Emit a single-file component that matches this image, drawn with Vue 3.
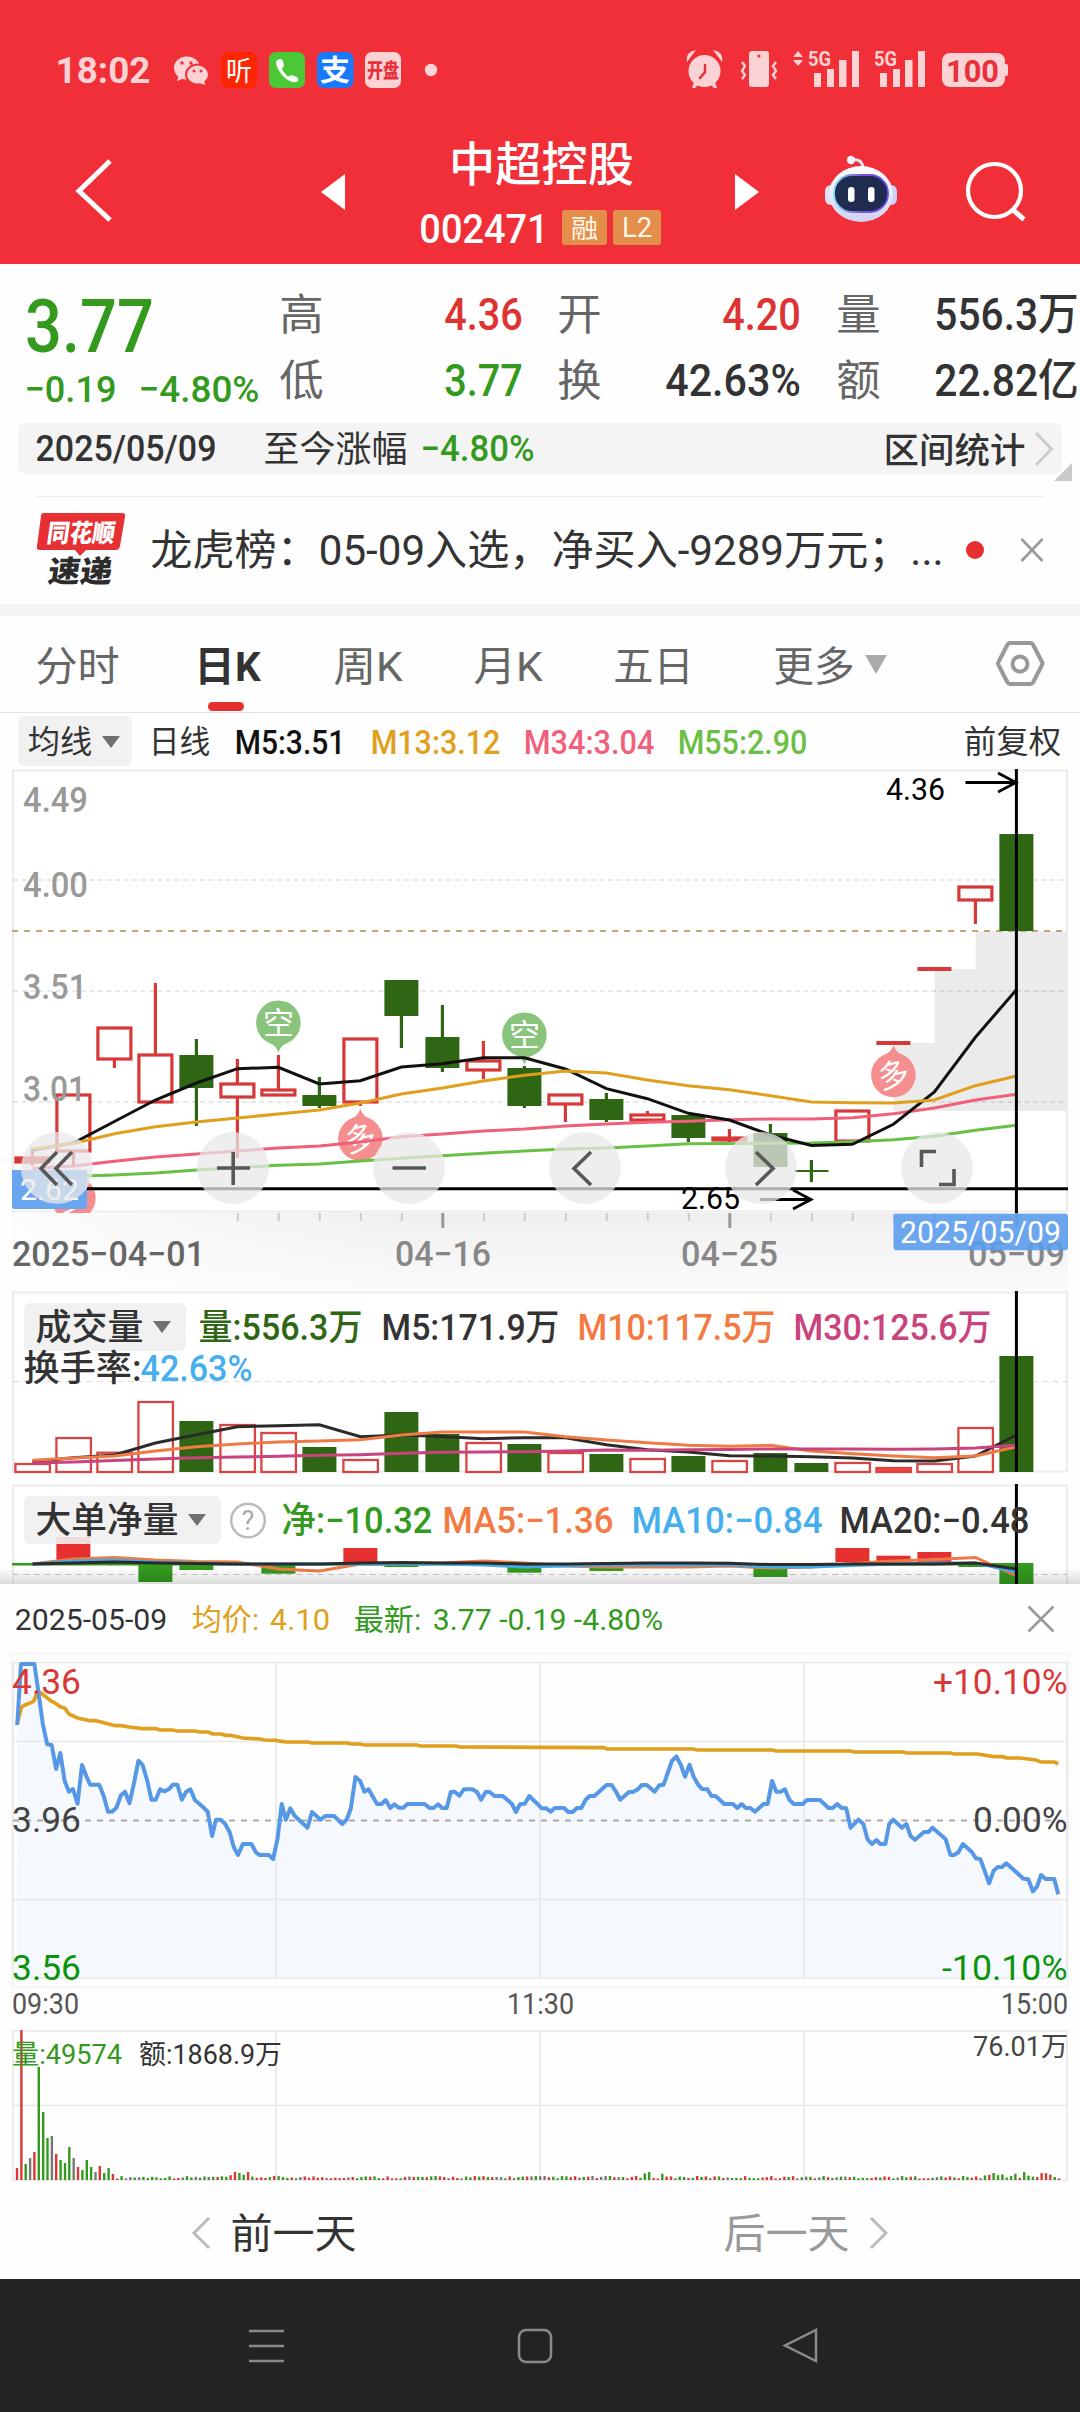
<script setup>
import { h } from 'vue'

// Single line of text fitted to an exact ink width; height equals the cap height.
const Fit = (p) => {
  const b = p.s * 0.04
  const cap = p.s * 0.72
  return h('svg', { width: p.w, height: cap, class: 'fit', style: { display: 'block', overflow: 'visible', flex: 'none' } }, [
    h('text', { x: -b, y: cap, 'font-size': p.s, textLength: +p.w + 2 * b, lengthAdjust: 'spacingAndGlyphs', fill: 'currentColor' }, p.t),
  ])
}
Fit.props = ['t', 'w', 's']

const cx = (i) => 32.4 + 41 * i
const line = (ys) => ys.map((y, i) => `${cx(i).toFixed(1)},${y}`).join(' ')

// [up, body top, body bottom, high, low]
const candles = [
  [1, 1158, 1162, 1148, 1166], [1, 1095, 1151, 1095, 1165], [1, 1028, 1059, 1028, 1068], [1, 1055, 1102, 983, 1102],
  [0, 1055, 1088, 1039, 1126], [1, 1084, 1097, 1059, 1158], [1, 1090, 1095, 1055, 1095], [0, 1095, 1106, 1077, 1108],
  [1, 1039, 1102, 1039, 1106], [0, 980, 1016, 980, 1048], [0, 1037, 1068, 1005, 1072], [1, 1061, 1070, 1041, 1079],
  [0, 1068, 1106, 1066, 1108], [1, 1095, 1104, 1095, 1122], [0, 1099, 1120, 1093, 1122], [1, 1115, 1120, 1111, 1120],
  [0, 1115, 1138, 1115, 1142], [1, 1138, 1140, 1129, 1143], [0, 1133, 1167, 1124, 1167], [0, 1170, 1172, 1160, 1182],
  [1, 1111, 1141, 1111, 1141], [1, 1043, 1043, 1043, 1043], [1, 969, 969, 969, 969], [1, 887, 900, 887, 924],
  [0, 834, 931, 834, 931],
]
const ma5 = [1150, 1143, 1121.5, 1100, 1083, 1068.7, 1067.3, 1084, 1080.7, 1067, 1063.7, 1057.7, 1057.7, 1069, 1088.7, 1098.7, 1113.3, 1120, 1135, 1145.5, 1144.3, 1124.3, 1092, 1037.3, 989.7]
const ma13 = [1149, 1143.5, 1133.7, 1126.7, 1122, 1118, 1114, 1110, 1103, 1094, 1088, 1081, 1075.3, 1071, 1073, 1080, 1085.7, 1089.7, 1095.7, 1102, 1102.7, 1103, 1100, 1085.7, 1076]
const ma34 = [1168.5, 1166, 1161.3, 1157, 1154, 1151, 1148, 1146, 1142, 1136.7, 1134, 1131, 1129, 1126, 1124, 1122.3, 1121.3, 1119.7, 1119, 1119, 1117.7, 1113.7, 1108, 1100, 1094.3]
const ma55 = [1178, 1176.3, 1175, 1173, 1170, 1167.7, 1165.3, 1164, 1161, 1158.3, 1155.7, 1153.3, 1151, 1149, 1148, 1146, 1143.7, 1143.6, 1143.3, 1143, 1141.7, 1139.7, 1136.3, 1130.3, 1125.3]

const volumes = [1464, 1438, 1452.7, 1402, 1421, 1425, 1433, 1447, 1460, 1412, 1434, 1443, 1444, 1453, 1454, 1459, 1456, 1461, 1453, 1463, 1463, 1468, 1464, 1428, 1356]
const v5 = [1461.7, 1457.7, 1455, 1443, 1434.7, 1426.7, 1425.7, 1424.7, 1436.7, 1435, 1436.5, 1438.7, 1437.7, 1437.7, 1444.7, 1449.7, 1452, 1455.7, 1456, 1456.7, 1458, 1460.7, 1461, 1456, 1435]
const v10 = [1460.3, 1458, 1456, 1451, 1446.7, 1444, 1442, 1441, 1439.7, 1435, 1432, 1432, 1432, 1436.7, 1440, 1442.7, 1445.3, 1446.3, 1445.3, 1451, 1453.7, 1456, 1457.7, 1456, 1446.7]
const v30 = [1463, 1462, 1460.5, 1459, 1457.7, 1457, 1456.3, 1455.3, 1454.7, 1453.3, 1452.3, 1452, 1451.7, 1451, 1450, 1450.2, 1449.7, 1449.4, 1449, 1449, 1449, 1449.3, 1449, 1448, 1445.3]

// [index, top, bottom, inflow]
const flows = [
  [1, 1537, 1562, 1], [3, 1564, 1582, 0], [4, 1564, 1570, 0], [6, 1564, 1573.7, 0], [8, 1548, 1562, 1], [9, 1564, 1567, 0],
  [12, 1564, 1572.7, 0], [14, 1564, 1571, 0], [18, 1563, 1577, 0], [20, 1548, 1562, 1], [21, 1555.7, 1562, 1],
  [22, 1552, 1562, 1], [23, 1564, 1567, 0], [24, 1563, 1584, 0],
]
const f5 = [1564, 1559, 1557.5, 1560, 1561.5, 1562, 1569, 1571, 1564, 1563.5, 1563, 1561, 1563, 1566, 1567, 1567, 1567, 1566, 1568, 1567, 1563.5, 1561, 1559.5, 1557.5, 1576]
const f10 = [1564, 1561, 1560, 1562, 1563, 1564, 1564, 1564, 1564, 1564, 1564, 1565, 1567, 1566, 1565, 1565, 1565, 1565, 1567, 1567, 1565.5, 1564, 1563, 1563, 1572]
const f20 = [1564, 1563, 1562, 1563, 1563.5, 1564, 1564, 1564, 1563, 1562.5, 1563, 1563, 1564, 1564, 1563.5, 1563, 1563, 1563.3, 1564.6, 1564.6, 1564, 1564, 1564, 1563, 1569]

const pins = [
  { i: 6, y: 1022.7, up: false, t: '空' }, { i: 12, y: 1034.7, up: false, t: '空' },
  { i: 8, y: 1138.7, up: true, t: '多' }, { i: 1, y: 1198, up: true, t: '多' }, { i: 21, y: 1075, up: true, t: '多' },
]

// Intraday series, sampled on a fine grid: x in 1/2.9037 px, y in 1/3 px below 1590
const grid = (s) => s.trim().split(/\s+/).map((q) => {
  const [x, y] = q.split(',').map(Number)
  return `${(x / 2.9037).toFixed(1)},${(1590 + y / 3).toFixed(1)}`
}).join(' ')
const price = grid(`50,405 61,222 100,222 112,310 124,400 137,463 150,465 163,537 175,489 188,573 200,605 212,597 225,641 238,525 250,557 262,584 288,584 301,618 314,665 325,665 338,653 351,616 363,605 376,640 390,575 402,512 414,525 427,570 440,629 452,629 465,598 478,604 490,598 502,584 515,584 528,629 540,606 553,598 566,630 590,652 603,665 616,738 627,689 641,689 654,702 667,727 679,772 691,795 705,762 730,762 743,787 754,795 781,795 793,807 806,745 818,642 830,689 843,655 856,678 893,713 906,666 931,689 944,678 970,678 994,702 1007,688 1019,655 1032,561 1046,573 1058,605 1070,598 1095,642 1108,642 1120,630 1133,654 1145,643 1158,653 1171,653 1183,642 1233,642 1247,654 1259,654 1272,643 1284,654 1297,654 1309,606 1320,605 1334,617 1347,598 1372,598 1385,606 1397,629 1410,606 1422,606 1436,618 1460,618 1486,641 1498,666 1510,643 1524,641 1537,618 1560,641
1573,655 1586,655 1599,665 1611,654 1638,654 1650,666 1663,666 1675,654 1688,654 1700,630 1712,618 1726,618 1761,585 1776,585 1788,604 1801,629 1826,606 1838,606 1852,598 1864,585 1878,585 1901,605 1914,586 1927,584 1951,513 1964,499 1977,525 1989,560 2002,524 2015,562 2028,585 2039,597 2054,598 2066,618 2078,618 2103,642 2128,642 2141,654 2153,642 2166,654 2179,654 2192,665 2217,642 2229,642 2242,573 2254,605 2267,605 2279,598 2292,629 2305,642 2331,642 2343,630 2381,630 2406,654 2418,654 2431,642 2443,653 2457,655 2470,713 2493,689 2507,702 2519,748 2532,762 2545,750 2556,762 2571,762 2582,702 2594,689 2619,713 2632,702 2644,738 2657,749 2683,726 2696,726 2708,713 2746,748 2760,795 2770,795 2783,787 2796,762 2821,785 2834,805 2847,808 2872,880 2885,842 2897,831 2910,831 2922,820 2972,866 2986,868 2999,904 3011,890 3023,855 3036,867 3061,867 3073,913`)
const average = grid(`50,400 62,352 72,345 90,338 98,333 108,308 118,308 148,333 160,339 175,350 188,354 201,373 225,384 262,392 278,392 335,407 352,407 375,411 412,416 452,416 465,420 500,420 514,423 566,423 580,426 604,426 617,432 642,432 655,436 670,436 705,444 754,447 768,450 800,451 830,456 895,456 906,459 1008,459 1020,462 1045,462 1058,465 1210,465 1222,468 1325,468 1335,471 1568,472 1753,473 1763,477 2013,477 2025,480 2243,480 2253,483 2470,483 2481,486 2621,486 2633,489 2760,489 2770,492 2838,492 2886,500 2911,500 2923,504 2960,504 3008,510 3023,516 3061,516 3073,521`)
const area = `17,1978 ${price} 1063,1904 1063,1978`

// Intraday volume per minute: [height, 1 red / 0 green / 2 grey]
const opening = [[12, 1], [150, 1], [16, 0], [22, 2], [28, 1], [113, 0], [68, 0], [42, 0], [44, 2], [26, 1], [20, 0], [17, 0], [33, 0], [22, 2], [13, 1], [10, 0], [20, 0], [13, 0], [8, 2], [14, 1], [7, 0], [12, 0], [6, 1]]
const tail = Array.from({ length: 217 }, (_, i) => {
  const n = Math.abs(Math.sin(i * 12.9898) * 43758.5453) % 1
  const busy = (i > 25 && i < 31) || (i > 120 && i < 127) || i > 198
  return [1.5 + n * 2.6 + (busy ? n * 4 : 0), [1, 0, 2, 0, 1][Math.floor(n * 50) % 5]]
})
const ticks = [...opening, ...tail]
const tickColor = ['#339a1e', '#d83838', '#777']

const stats = [
  ['高', '4.36', 75, 'red', '开', '4.20', 75, 'red', '量', '556.3万'],
  ['低', '3.77', 75, 'green', '换', '42.63%', 132, 'dark', '额', '22.82亿'],
]
const months = [['2025-04-01', 13, 191, '#666'], ['04-16', 396, 94, '#888'], ['04-25', 682, 95, '#888'], ['05-09', 969, 95, '#888']]
</script>

<template>
  <div class="app">
    <header class="top">
      <div class="status">
        <Fit class="clock" t="18:02" w="92" s="36" />
        <svg class="apps" width="270" height="40" viewBox="170 51 270 40">
          <g fill="#fcd3d5">
            <ellipse cx="187" cy="69" rx="13" ry="11.5" /><path d="M179 76l-2 6 8-3z" />
            <ellipse cx="197.500" cy="75.500" rx="11.500" ry="10" stroke="#f12f38" stroke-width="2" /><path d="M199 84l6 2-1-6z" />
            <circle cx="431" cy="71" r="6.200" />
            <rect x="365" y="53" width="36" height="36" rx="7" />
          </g>
          <g fill="#f12f38"><circle cx="182" cy="64" r="1.700" /><circle cx="191" cy="64" r="1.700" /><circle cx="194" cy="72" r="1.500" /><circle cx="201" cy="72" r="1.500" /></g>
          <rect x="221" y="53" width="36" height="36" rx="7" fill="#fd2603" />
          <rect x="269" y="53" width="36" height="36" rx="7" fill="#4cc736" />
          <rect x="317" y="53" width="36.500" height="36" rx="7" fill="#1979fd" />
          <path d="M276 62q5-4 7 0l1 5q-3 2-1 5l4 5q2 1 4-1l6 2q3 4-1 5-6 1-12-5-8-8-8-16z" fill="#fff" />
          <text x="226" y="82" font-size="27" textLength="26" lengthAdjust="spacingAndGlyphs" fill="#fff">听</text>
          <text x="320" y="82" font-size="29" textLength="30" lengthAdjust="spacingAndGlyphs" fill="#fff" font-weight="700">支</text>
          <text x="367" y="79" font-size="20" textLength="32" lengthAdjust="spacingAndGlyphs" fill="#e8303a" font-weight="900">开盘</text>
        </svg>
        <svg class="sys" width="330" height="40" viewBox="682 51 330 40" fill="#fcd3d5">
          <circle cx="704.500" cy="72" r="16" /><path d="M687 63q-2-10 9-12zM722 63q2-10-9-12zM694 83l-2 6h3l4-4zM715 83l2 6h-3l-4-4z" />
          <path d="M705 66v7l-5 6" fill="none" stroke="#e8303a" stroke-width="2.500" stroke-linecap="round" />
          <rect x="749" y="52" width="20" height="36" rx="3" /><circle cx="759" cy="57" r="1.600" fill="#e8303a" />
          <path d="M742 63l3 4-3 5 3 4-3 4M776 63l-3 4 3 5-3 4 3 4" fill="none" stroke="#fcd3d5" stroke-width="2.400" />
          <path d="M793 58l5-6 5 6zM793 61l5 6 5-6z" />
          <g font-size="21" font-weight="700"><text x="808" y="67" textLength="23" lengthAdjust="spacingAndGlyphs">5G</text><text x="874" y="67" textLength="23" lengthAdjust="spacingAndGlyphs">5G</text></g>
          <path d="M814 74h7v14h-7zM827 70h7v18h-7zM839 61h7.500v27h-7.500zM852 52h7v36h-7zM880 74h7v14h-7zM893 70h7v18h-7zM905 61h7.500v27h-7.500zM918 52h7v36h-7z" />
          <rect x="942" y="54" width="63" height="34" rx="8" /><rect x="1003" y="65" width="5" height="12" rx="2" />
          <text x="946" y="82.500" font-size="31" font-weight="700" textLength="53" lengthAdjust="spacingAndGlyphs" fill="#e8303a">100</text>
        </svg>
      </div>
      <nav class="title-row">
        <svg class="back" width="40" height="66" viewBox="75 156 40 66"><path d="M110 160L79 190l31 29" fill="none" stroke="#fff" stroke-width="5" /></svg>
        <svg class="prev" width="24" height="36"><path d="M24 0v36L0 18z" fill="#fff" /></svg>
        <div class="title">
          <Fit t="中超控股" w="181" s="47" />
          <div class="code"><Fit t="002471" w="126" s="41" /><b class="w45"><Fit t="融" w="25" s="26" /></b><b class="w48"><Fit t="L2" w="28" s="27" /></b></div>
        </div>
        <svg class="next" width="24" height="36"><path d="M0 0v36l24-18z" fill="#fff" /></svg>
        <svg class="robot" width="74" height="70" viewBox="824 155 74 70">
          <defs>
            <linearGradient id="shell" x1="0" y1="0" x2="0" y2="1"><stop offset="0" stop-color="#fff" /><stop offset="1" stop-color="#cfd2f3" /></linearGradient>
            <linearGradient id="rim"><stop offset="0" stop-color="#7fe0f5" /><stop offset=".5" stop-color="#7a55d8" /><stop offset="1" stop-color="#6a4cf0" /></linearGradient>
          </defs>
          <path d="M852 160q10-2 11 8" fill="none" stroke="#e3e4f6" stroke-width="3" /><circle cx="851" cy="160" r="4.200" fill="#f3f3fc" />
          <rect x="825" y="185" width="12" height="20" rx="6" fill="#dfe1f8" /><rect x="885" y="185" width="12" height="20" rx="6" fill="#cdd1f4" />
          <ellipse cx="861" cy="194" rx="32" ry="28" fill="url(#shell)" />
          <rect x="834" y="175" width="54" height="37" rx="18" fill="#202b50" stroke="url(#rim)" stroke-width="1.800" />
          <rect x="848" y="187" width="6.500" height="15" rx="3" fill="#fff" /><rect x="868" y="187" width="6.500" height="15" rx="3" fill="#fff" />
        </svg>
        <svg class="find" width="64" height="64" viewBox="964 158 64 64" fill="none" stroke="#fff"><circle cx="994.500" cy="190.500" r="26.500" stroke-width="4.200" /><path d="M1012 209l12 10.500" stroke-width="5" /></svg>
      </nav>
    </header>

    <section class="quote">
      <div class="last green">
        <Fit t="3.77" w="123" s="75" />
        <div class="delta"><Fit t="−0.19" w="89" s="37.500" /><Fit t="−4.80%" w="118" s="37.500" /></div>
      </div>
      <div class="stats">
        <div v-for="r in stats" :key="r[0]" class="stat-row">
          <i><Fit :t="r[0]" w="41" s="43" /></i><span :class="r[3]"><Fit :t="r[1]" :w="r[2]" s="44.500" /></span>
          <i><Fit :t="r[4]" w="41" s="43" /></i><span :class="r[7]"><Fit :t="r[5]" :w="r[6]" s="44.500" /></span>
          <i><Fit :t="r[8]" w="41" s="43" /></i><span class="dark"><Fit :t="r[9]" w="141" s="44" /></span>
        </div>
      </div>
    </section>

    <section class="range">
      <div class="range-bar">
        <Fit class="m" t="2025/05/09" w="178" s="36.500" />
        <Fit class="since" t="至今涨幅" w="141" s="36" />
        <Fit class="m green since-v" t="−4.80%" w="111" s="36.500" />
        <Fit class="zone" t="区间统计" w="139" s="35" />
        <svg width="20" height="36" class="arr"><path d="M2 2l15.500 16L2 34" fill="none" stroke="#ccc" stroke-width="3" /></svg>
      </div>
      <svg class="corner" width="18" height="18"><path d="M18 0v18H0z" fill="#c9c9c9" /></svg>
    </section>

    <section class="news">
      <svg width="90" height="76" viewBox="36 513 90 76">
        <path d="M44 514h78q4 0 3 4l-5 29q-1 4-4 4H86l-6 6-5-6H40q-4 0-3-4l4-30q0-3 3-3z" fill="#e63034" />
        <g font-weight="900"><text x="0" y="0" font-size="25" fill="#fff" textLength="68" lengthAdjust="spacingAndGlyphs" transform="translate(46 543) skewX(-8)">同花顺</text>
          <text x="0" y="0" font-size="30" fill="#2c2c2c" textLength="64" lengthAdjust="spacingAndGlyphs" transform="translate(47 583) skewX(-8)">速递</text></g>
      </svg>
      <Fit class="headline" t="龙虎榜：05-09入选，净买入-9289万元；..." w="790" s="42" />
      <u class="dot" />
      <svg class="close" width="24" height="26"><path d="M1.500 2l21 22M22.500 2l-21 22" stroke="#999" stroke-width="2.600" /></svg>
    </section>

    <nav class="tabs">
      <Fit t="分时" w="81" s="41" /><span class="on"><Fit t="日K" w="63" s="41" /></span><Fit class="t3" t="周K" w="66" s="41" /><Fit class="t4" t="月K" w="66" s="41" /><Fit class="t5" t="五日" w="77" s="41" /><Fit class="t6" t="更多" w="78" s="41" />
      <svg class="more" width="22" height="19"><path d="M0 0h22L11 19z" fill="#aaa" /></svg>
      <svg class="gear" width="50" height="48" viewBox="995 640 50 48" fill="none" stroke="#999" stroke-width="4" stroke-linejoin="round"><path d="M1010 643h20.500q1.500 0 2.500 1.500l9 17.500q1 1.500 0 3l-9 17.500q-1 1.500-2.500 1.500H1010q-1.500 0-2.500-1.500l-9-17.500q-1-1.500 0-3l9-17.500q1-1.500 2.500-1.500z" /><circle cx="1020" cy="664" r="7.500" /></svg>
    </nav>

    <div class="ma">
      <button class="chip"><Fit t="均线" w="62" s="32" /><em /></button>
      <Fit class="m1" t="日线" w="59" s="32" />
      <Fit class="m m2" t="M5:3.51" w="108" s="33.500" /><Fit class="m c13" t="M13:3.12" w="127" s="33.500" /><Fit class="m c34" t="M34:3.04" w="128" s="33.500" /><Fit class="m c55" t="M55:2.90" w="127" s="33.500" />
      <Fit class="adj" t="前复权" w="95" s="32" />
    </div>

    <svg class="chart" width="1080" height="522" viewBox="0 769 1080 522">
      <defs>
        <linearGradient id="axis" x1="0" y1="0" x2="0" y2="1"><stop offset="0" stop-color="#efefef" /><stop offset="1" stop-color="#fbfbfb" /></linearGradient>
        <linearGradient id="axisfade"><stop offset="0" stop-color="#fff" stop-opacity=".85" /><stop offset="1" stop-color="#fff" stop-opacity="0" /></linearGradient>
        <clipPath id="kbox"><rect x="12" y="769" width="1057" height="444" /></clipPath>
      </defs>
      <rect x="12" y="1213" width="1056" height="78" fill="url(#axis)" /><rect x="12" y="1213" width="400" height="78" fill="url(#axisfade)" />
      <rect x="13" y="770.500" width="1054" height="441" fill="#fff" stroke="#ececec" stroke-width="2" />
      <path d="M893.700 1111V1043h41v-74h41v-38H1068v180z" fill="#ebebeb" />
      <path d="M13 880H1067M13 991H1067M13 1102H1067" stroke="#000" stroke-opacity=".09" stroke-width="2" stroke-dasharray="5 3.500" />
      <path d="M12 931H1067" stroke="#c4a574" stroke-width="2" stroke-dasharray="6 6" />
      <g fill="#999" font-size="35" font-weight="500">
        <text x="23" y="812" textLength="65" lengthAdjust="spacingAndGlyphs">4.49</text><text x="23" y="897" textLength="65" lengthAdjust="spacingAndGlyphs">4.00</text>
        <text x="23" y="999" textLength="64" lengthAdjust="spacingAndGlyphs">3.51</text>
      </g>
      <g v-for="(c, i) in candles" :key="i" :stroke="c[0] ? '#d83838' : '#2f6614'" stroke-width="3.200">
        <path :d="`M${cx(i)} ${c[3]}V${c[1]}M${cx(i)} ${c[2]}V${c[4]}`" />
        <path v-if="c[1] === c[2]" :d="`M${cx(i) - 17} ${c[1]}h34`" stroke-width="4" />
        <rect v-else-if="c[0]" :x="cx(i) - 16.500" :y="c[1]" width="33" :height="c[2] - c[1]" :fill="c[2] - c[1] > 4 ? '#fff' : '#e63030'" />
        <rect v-else :x="cx(i) - 17" :y="c[1]" width="34" :height="c[2] - c[1]" fill="#2f6614" stroke="none" />
      </g>
      <text x="23" y="1101" font-size="35" font-weight="500" fill="#999" textLength="63" lengthAdjust="spacingAndGlyphs">3.01</text>
      <g clip-path="url(#kbox)">
        <g v-for="p in pins" :key="p.i" :transform="`translate(${cx(p.i)} ${p.y})`">
          <path :d="p.up ? 'M0-30q-2 7-9 10h18q-7-3-9-10z' : 'M0 30q-2-7-9-10h18q-7 3-9 10z'" :fill="p.up ? '#f58e8e' : '#8ac47c'" />
          <circle r="22.300" :fill="p.up ? '#f58e8e' : '#8ac47c'" />
          <text y="11" text-anchor="middle" font-size="31" fill="#fff" :transform="p.up ? 'rotate(-14)' : ''">{{ p.t }}</text>
        </g>
      </g>
      <g fill="none" stroke-width="3">
        <polyline :points="line(ma55)" stroke="#6abf45" /><polyline :points="line(ma34)" stroke="#f0607a" />
        <polyline :points="line(ma5)" stroke="#111" /><polyline :points="line(ma13)" stroke="#e09f1c" />
      </g>
      <path d="M87 1188.700H1068" stroke="#000" stroke-width="3" />
      <path d="M1016.400 769V1213" stroke="#000" stroke-width="3" />
      <g font-size="30.500"><text x="886" y="800" textLength="59" lengthAdjust="spacingAndGlyphs">4.36</text><text x="681" y="1209" textLength="59" lengthAdjust="spacingAndGlyphs">2.65</text></g>
      <path d="M965.500 782.500H1015M998 773l18 9.500-18 9.500M760 1199.500h50M793 1190l18 9.500-18 9.500" fill="none" stroke="#000" stroke-width="2.800" />
      <path d="M12 1170h75v36q0 3-3 3H15q-3 0-3-3z" fill="#6aa6f0" />
      <text x="20" y="1199.500" font-size="29.500" fill="#fff" textLength="59" lengthAdjust="spacingAndGlyphs">2.62</text>
      <g fill="#e8e8e8" fill-opacity=".75"><circle v-for="x in [57, 233, 409, 585, 761, 937]" :key="x" :cx="x" cy="1168" r="36" /></g>
      <path d="M57 1152l-16 16.500 16 16.500M72 1152l-16 16.500 16 16.500M217 1168h33M233.200 1152v33M392.500 1168h33.500M591 1152l-17 16.500 17 16.500M756 1152l17 16.500-17 16.500M921.500 1167v-15.500H936M939 1184.500h15v-15.500" fill="none" stroke="#585858" stroke-width="3.600" />
      <path v-for="i in 20" :key="i" :d="`M${cx(i + 4) + 0.4} 1213v${[10, 17, 24].includes(i + 4) ? 15 : 8}`" :stroke="[10, 17, 24].includes(i + 4) ? '#999' : '#ccc'" :stroke-width="[10, 17, 24].includes(i + 4) ? 3 : 2" />
      <text v-for="m in months" :key="m[0]" :x="m[1] - 1" y="1266" font-size="35" font-weight="500" :textLength="m[2] + 2" lengthAdjust="spacingAndGlyphs" :fill="m[3]">{{ m[0].replaceAll('-', '−') }}</text>
      <rect x="893.500" y="1213.700" width="174.500" height="36.500" rx="3" fill="#5b9cec" fill-opacity=".9" />
      <text x="900" y="1243" font-size="31" fill="#fff" textLength="161" lengthAdjust="spacingAndGlyphs">2025/05/09</text>
    </svg>

    <div class="panel volume">
      <svg class="plot" width="1080" height="193" viewBox="0 1291 1080 193">
        <rect x="13" y="1292.500" width="1054" height="179" fill="#fff" stroke="#ececec" stroke-width="2" />
        <path d="M13 1381.500H1067" stroke="#ddd" stroke-dasharray="6 4.500" />
        <template v-for="(v, i) in volumes" :key="i">
          <rect v-if="candles[i][0]" :x="cx(i) - 17" :y="v" width="34.500" :height="1472 - v" :fill="i === 21 ? '#f44' : '#fff'" stroke="#d64444" stroke-width="2.300" />
          <rect v-else :x="cx(i) - 17" :y="v" width="34" :height="1472 - v" fill="#2f6614" />
        </template>
        <g fill="none" stroke-width="3"><polyline :points="line(v5)" stroke="#2b2b2b" /><polyline :points="line(v10)" stroke="#ef7a43" /><polyline :points="line(v30)" stroke="#c9437d" /></g>
        <path d="M1016.400 1291V1472" stroke="#000" stroke-width="3" />
      </svg>
      <div class="legend">
        <button class="chip big"><Fit t="成交量" w="105" s="36" /><em /></button>
        <Fit class="m l1" t="量:556.3万" w="161" s="36.500" /><Fit class="m l2" t="M5:171.9万" w="175" s="36.500" /><Fit class="m l3" t="M10:117.5万" w="195" s="36.500" /><Fit class="m l4" t="M30:125.6万" w="195" s="36.500" />
      </div>
      <div class="turnover"><Fit class="m" t="换手率:" w="115" s="36" /><Fit class="m sky" t="42.63%" w="109" s="36.500" /></div>
    </div>

    <div class="panel flow">
      <svg class="plot" width="1080" height="100" viewBox="0 1484 1080 100">
        <defs><linearGradient id="shade" x1="0" y1="0" x2="0" y2="1"><stop offset="0" stop-opacity="0" /><stop offset="1" stop-opacity=".14" /></linearGradient></defs>
        <path d="M13 1600V1485.500H1067V1600" fill="#fff" stroke="#ececec" stroke-width="2" />
        <path d="M13 1574.500H1067" stroke="#ccc" stroke-dasharray="6 4.500" /><path d="M12 1564.300H1033" stroke="#339a1e" stroke-width="2.600" />
        <rect v-for="f in flows" :key="f[0]" :x="cx(f[0]) - 17" :y="f[1]" width="34" :height="f[2] - f[1]" :fill="f[3] ? '#e63030' : '#339a1e'" />
        <g fill="none" stroke-width="3"><polyline :points="line(f5)" stroke="#ef7a43" /><polyline :points="line(f10)" stroke="#45a8e8" /><polyline :points="line(f20)" stroke="#2b2b2b" /></g>
        <path d="M1016.400 1484V1584" stroke="#000" stroke-width="3" />
        <rect x="0" y="1568" width="1080" height="16" fill="url(#shade)" />
      </svg>
      <div class="legend">
        <button class="chip big"><Fit t="大单净量" w="140" s="36" /><em /></button>
        <svg class="help" width="36" height="37"><circle cx="18" cy="18.500" r="16.800" fill="none" stroke="#bbb" stroke-width="2.500" /><text x="18" y="28" text-anchor="middle" font-size="27" fill="#aaa">?</text></svg>
        <Fit class="m green n1" t="净:−10.32" w="148" s="36" /><Fit class="m orange n2" t="MA5:−1.36" w="168" s="36" /><Fit class="m sky n3" t="MA10:−0.84" w="188" s="36" /><Fit class="m n4" t="MA20:−0.48" w="187" s="36" />
      </div>
    </div>

    <section class="sheet">
      <div class="sheet-head">
        <Fit t="2025-05-09" w="150" s="30" /><Fit class="gold s1" t="均价:" w="65" s="30" /><Fit class="gold s2" t="4.10" w="58" s="30" />
        <Fit class="green s3" t="最新:" w="65" s="30" /><Fit class="green s4" t="3.77 -0.19 -4.80%" w="228" s="30" />
        <svg class="x" width="28" height="28"><path d="M1.500 1.500l25 25M26.500 1.500l-25 25" stroke="#999" stroke-width="2.600" /></svg>
      </div>
      <svg width="1080" height="543" viewBox="0 1651 1080 543">
        <rect x="12" y="1653.500" width="1056" height="334" fill="none" stroke="#f3f3f3" stroke-width="1.500" />
        <polygon :points="area" fill="#f5f9fe" />
        <path d="M13 1662.500H1067V1978H13zM13 1741.500H1067M13 1899.500H1067M276 1662V1978M540 1662V1978M804 1662V1978" fill="none" stroke="#e6e8ea" stroke-width="1.600" />
        <path d="M13 1820.500H1067" stroke="#aaa" stroke-width="2" stroke-dasharray="6 6" />
        <polyline :points="average" fill="none" stroke="#e09f1c" stroke-width="3.700" /><polyline :points="price" fill="none" stroke="#5698e6" stroke-width="4" stroke-linejoin="round" />
        <g font-size="34.500">
          <text x="12" y="1694" textLength="69" lengthAdjust="spacingAndGlyphs" fill="#d83838">4.36</text><text x="12" y="1831.700" textLength="69" lengthAdjust="spacingAndGlyphs" fill="#444">3.96</text><text x="12" y="1979.500" textLength="69" lengthAdjust="spacingAndGlyphs" fill="#0c930c">3.56</text>
          <text x="933" y="1694" textLength="134.500" lengthAdjust="spacingAndGlyphs" fill="#d83838">+10.10%</text><text x="973" y="1831.700" textLength="94.500" lengthAdjust="spacingAndGlyphs" fill="#444">0.00%</text><text x="942" y="1979.500" textLength="125.500" lengthAdjust="spacingAndGlyphs" fill="#0c930c">-10.10%</text>
        </g>
        <g font-size="29" fill="#555"><text x="12" y="2014" textLength="67" lengthAdjust="spacingAndGlyphs">09:30</text><text x="507" y="2014" textLength="67" lengthAdjust="spacingAndGlyphs">11:30</text><text x="1001" y="2014" textLength="67" lengthAdjust="spacingAndGlyphs">15:00</text></g>
        <path d="M13 2031H1067V2180H13zM13 2105.500H1067M276 2031V2180M540 2031V2180M804 2031V2180" fill="none" stroke="#e8e8e8" stroke-width="1.600" />
        <path v-for="(t, i) in ticks" :key="i" :d="`M${(17 + 4.36 * i).toFixed(1)} 2180v${(-t[0]).toFixed(1)}`" :stroke="tickColor[t[1]]" stroke-width="2.400" />
        <g font-size="27"><text x="12" y="2064" textLength="110" lengthAdjust="spacingAndGlyphs" fill="#339a1e">量:49574</text><text x="139" y="2064" textLength="143" lengthAdjust="spacingAndGlyphs" fill="#333">额:1868.9万</text><text x="973" y="2055.500" textLength="95" lengthAdjust="spacingAndGlyphs" fill="#444">76.01万</text></g>
      </svg>
      <div class="pager">
        <div class="day"><svg width="20" height="34"><path d="M18 2L3 17l15 15" fill="none" stroke="#bbb" stroke-width="3" /></svg><Fit t="前一天" w="123" s="41" /></div>
        <div class="day next-day"><Fit t="后一天" w="123" s="41" /><svg width="20" height="34"><path d="M2 2l15 15L2 32" fill="none" stroke="#bbb" stroke-width="3" /></svg></div>
      </div>
    </section>

    <footer class="sysnav">
      <svg width="1080" height="133" viewBox="0 2279 1080 133" fill="none" stroke="#8a8a8a" stroke-width="2.500"><path d="M249 2331h35M249 2346h35M249 2361h35M816 2330v31l-31-15.500z" /><rect x="519" y="2330" width="32" height="32" rx="7" /></svg>
    </footer>
  </div>
</template>

<style>
body { margin: 0; background: #fff; }
</style>

<style scoped>
.app { width: 1080px; height: 2412px; overflow: hidden; display: flex; flex-direction: column; background: #fefefe; color: #333; font-family: Roboto, "Noto Sans CJK SC", sans-serif; }
.app > * { flex: none; box-sizing: border-box; }
svg { display: block; flex: none; overflow: visible; }
button { border: 0; font: inherit; color: inherit; box-sizing: border-box; }
.green { color: #339a1e; }
.red { color: #dd3333; }
.dark { color: #333; }
.sky { color: #45aeee; }
.orange { color: #f37a43; }
.gold { color: #e09f1c; }
.m { font-weight: 500; }

.top { height: 264px; background: #f12f38; color: #fff; }
.status { height: 142px; display: flex; align-items: center; padding: 0 68px 2px 57px; box-sizing: border-box; }
.clock { color: #fcd3d5; font-weight: 700; }
.apps { margin-left: 21px; }
.sys { margin-left: auto; }
.title-row { display: flex; align-items: center; height: 96px; padding: 0 52px 0 75px; box-sizing: border-box; }
.prev { margin: 4px 0 0 206px; }
.title { display: flex; flex-direction: column; align-items: center; width: 241px; margin: 12px 0 0 76px; gap: 30px; }
.title .code { display: flex; align-items: center; width: 241px; font-weight: 500; }
.title > .fit { font-weight: 500; }
.code b { display: flex; align-items: center; justify-content: center; height: 35px; background: #e48e4b; border-radius: 3px; font-weight: 400; color: #fff6e6; }
.w45 { width: 45px; margin-left: 15px; }
.w48 { width: 48px; margin-left: 6px; }
.next { margin: 4px 0 0 73px; }
.robot { margin-left: 65px; }
.find { margin-left: 66px; }

.quote { height: 159px; display: flex; padding-left: 28px; }
.last { width: 253px; padding-top: 34px; font-weight: 500; box-sizing: border-box; }
.delta { display: flex; gap: 25px; margin: 23px 0 0 -2px; }
.stats { padding-top: 17px; font-weight: 500; }
.stat-row { display: grid; grid-template-columns: 41px 199px 79px 199px 80px 198px; height: 66px; align-items: center; }
.stat-row i { color: #666; font-style: normal; font-weight: 400; justify-self: end; }
.stat-row span { justify-self: end; }

.range { height: 73px; padding-left: 18px; position: relative; }
.range-bar { width: 1044px; height: 51px; background: #f4f4f4; border-radius: 7px; display: flex; align-items: center; padding: 0 8px 0 19px; box-sizing: border-box; }
.since { margin-left: 50px; }
.since-v { margin-left: 16px; }
.zone { margin-left: auto; font-weight: 500; padding-top: 4px; }
.arr { margin-left: 10px; }
.corner { position: absolute; right: 8px; top: 40px; }

.news { height: 120px; border-bottom: 12px solid #f4f4f4; padding-left: 36px; display: flex; align-items: center; background: linear-gradient(#eee, #eee) 36px 0 / 1008px 1px no-repeat; }
.headline { margin-left: 26px; }
.dot { width: 18px; height: 18px; border-radius: 50%; background: #e63030; margin-left: 24px; }
.close { margin-left: 36px; }

.tabs { height: 97px; display: flex; align-items: center; padding: 3px 0 0 37px; color: #666; border-bottom: 1px solid #e3e3e3; }
.on { position: relative; color: #333; font-weight: 700; margin-left: 78px; }
.on::after { content: ""; position: absolute; left: 12px; bottom: -31px; width: 36px; height: 9px; border-radius: 5px; background: #e63030; }
.t3 { margin-left: 76px; }
.t4 { margin-left: 74px; }
.t5 { margin-left: 74px; }
.t6 { margin-left: 83px; }
.more { margin: -2px 0 0 12px; }
.gear { margin: -4px 0 0 108px; }

.ma { height: 56px; display: flex; align-items: center; padding: 0 20px 0 18px; }
.ma > .fit { padding-top: 2px; }
.chip { display: flex; align-items: center; width: 114px; height: 50px; padding: 2px 10px 0 11px; gap: 11px; border-radius: 6px; background: rgba(240, 240, 240, .9); }
.chip em { width: 0; height: 0; border: 9px solid transparent; border-top: 12px solid #707070; border-bottom: 0; }
.m1 { margin-left: 18px; }
.m2 { margin-left: 27px; color: #111; }
.c13 { margin-left: 28px; color: #e09f1c; }
.c34 { margin-left: 26px; color: #f0607a; }
.c55 { margin-left: 26px; color: #6abf45; }
.adj { margin-left: auto; }

.panel { display: grid; align-content: start; }
.panel > * { grid-column: 1; }
.volume { height: 193px; grid-template-rows: 12px 48px 28px 105px; }
.flow { height: 100px; grid-template-rows: 12px 48px 40px; overflow: hidden; }
.plot { grid-row: 1 / -1; overflow: hidden; }
.legend { grid-row: 2; display: flex; align-items: center; padding-left: 24px; }
.chip.big { width: auto; height: 48px; padding: 0 15px 0 13px; font-weight: 500; }
.l1 { margin-left: 14px; color: #2f6614; }
.l2 { margin-left: 22px; }
.l3 { margin-left: 21px; color: #f37a43; }
.l4 { margin-left: 21px; color: #c9437d; }
.turnover { grid-row: 3; display: flex; align-items: center; padding: 6px 0 0 25px; gap: 2px; }
.help { margin-left: 9px; }
.n1 { margin-left: 17px; }
.n2 { margin-left: 13px; }
.n3 { margin-left: 21px; }
.n4 { margin-left: 20px; }

.sheet { height: 695px; background: #fefefe; }
.sheet-head { height: 67px; display: flex; align-items: center; padding: 3px 25px 0 16px; box-sizing: border-box; }
.s1 { margin-left: 27px; }
.s2 { margin-left: 13px; }
.s3 { margin-left: 26px; }
.s4 { margin-left: 14px; }
.x { margin-left: auto; }
.pager { height: 77px; display: flex; align-items: center; justify-content: space-between; padding: 0 191px; }
.day { display: flex; align-items: center; gap: 21px; }
.next-day { color: #999; }
.sysnav { height: 133px; background: #232323; }
</style>
